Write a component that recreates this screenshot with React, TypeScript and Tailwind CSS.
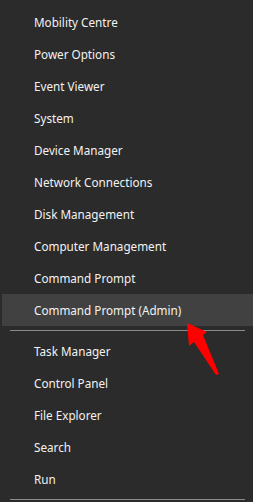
const top = [
  "Mobility Centre",
  "Power Options",
  "Event Viewer",
  "System",
  "Device Manager",
  "Network Connections",
  "Disk Management",
  "Computer Management",
  "Command Prompt",
  "Command Prompt (Admin)",
];

const bottom = ["Task Manager", "Control Panel", "File Explorer", "Search", "Run"];

const Item = ({ label, active }: { label: string; active?: boolean }) => (
  <div
    className={`flex h-[32px] items-center pl-[32px] pt-px text-[11.7px] text-[#f2f2f2] ${
      active ? "bg-[#414141]" : ""
    }`}
  >
    {label}
  </div>
);

export default function App() {
  return (
    <div
      className="relative h-[502px] w-[253px] overflow-hidden bg-[#2b2b2b] pl-[2px] pt-[6px]"
      style={{ fontFamily: '"Noto Sans", "Open Sans", sans-serif' }}
    >
      {top.map((t) => (
        <Item key={t} label={t} active={t === "Command Prompt (Admin)"} />
      ))}
      <div className="mx-[8px] mt-[4px] mb-[4px] h-px bg-[#8a8a8a]" />
      {bottom.map((t) => (
        <Item key={t} label={t} />
      ))}
      <div className="mx-[8px] mt-[4px] h-px bg-[#8a8a8a]" />

      {/* red pointer arrow */}
      <svg
        className="absolute left-0 top-0"
        width="253"
        height="502"
        viewBox="0 0 253 502"
      >
        <polygon
          points="187,323 207,332 203,335 219,374 216,375 194,342 189,346"
          fill="#ff0000"
        />
      </svg>
    </div>
  );
}
